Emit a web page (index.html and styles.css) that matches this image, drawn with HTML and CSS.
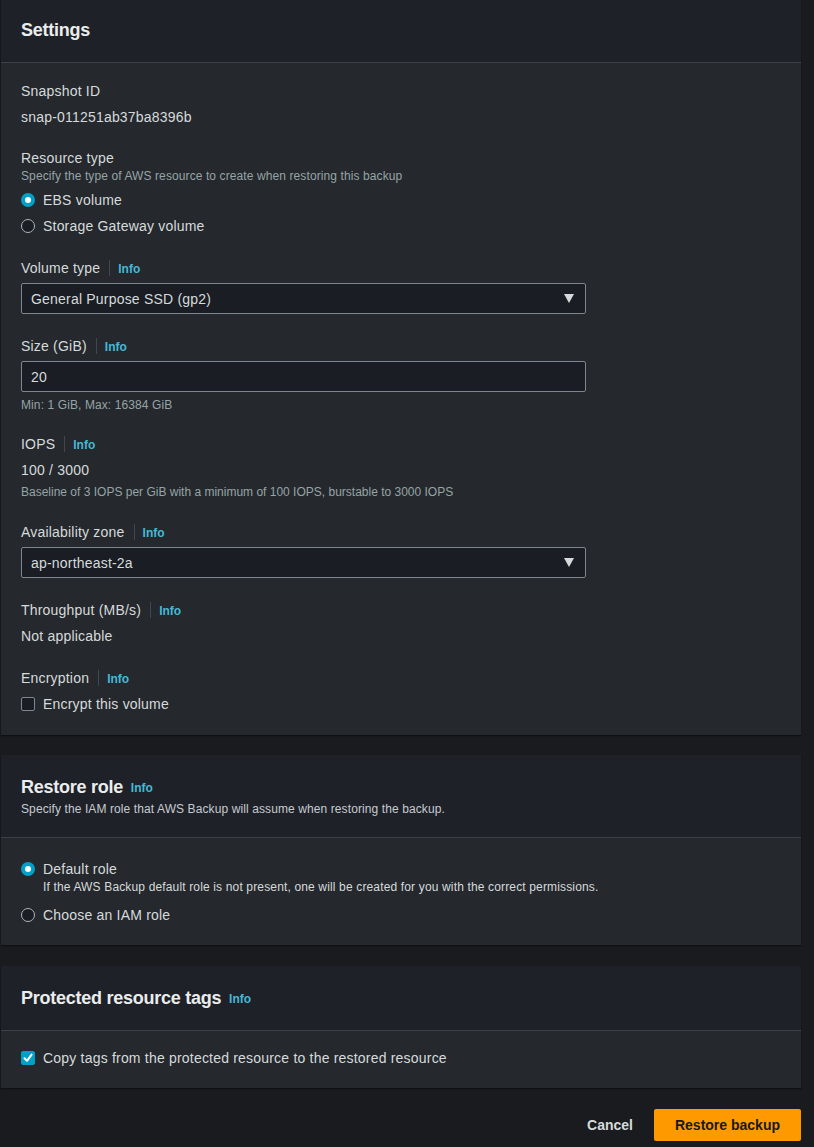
FILE: index.html
```html
<!DOCTYPE html>
<html>
<head>
<meta charset="utf-8">
<link rel="stylesheet" href="styles.css">
</head>
<body>
<div class="page">
  <section class="panel">
    <div class="panel-head head-settings">
      <h2 class="title">Settings</h2>
    </div>
    <div class="panel-body settings-body">
      <div class="field f-snap">
        <div class="label">Snapshot ID</div>
        <div class="value">snap-011251ab37ba8396b</div>
      </div>
      <div class="field f-res">
        <div class="label">Resource type</div>
        <div class="desc">Specify the type of AWS resource to create when restoring this backup</div>
        <div class="radio-row r-first"><span class="radio on"></span><span>EBS volume</span></div>
        <div class="radio-row"><span class="radio"></span><span>Storage Gateway volume</span></div>
      </div>
      <div class="field f-vol">
        <div class="label-row"><span class="label">Volume type</span><span class="sep"></span><span class="info">Info</span></div>
        <div class="select">General Purpose SSD (gp2)<span class="caret"></span></div>
      </div>
      <div class="field f-size">
        <div class="label-row"><span class="label">Size (GiB)</span><span class="sep"></span><span class="info">Info</span></div>
        <div class="select">20</div>
        <div class="hint">Min: 1 GiB, Max: 16384 GiB</div>
      </div>
      <div class="field f-iops">
        <div class="label-row"><span class="label">IOPS</span><span class="sep"></span><span class="info">Info</span></div>
        <div class="value v-iops">100 / 3000</div>
        <div class="hint h-iops">Baseline of 3 IOPS per GiB with a minimum of 100 IOPS, burstable to 3000 IOPS</div>
      </div>
      <div class="field f-az">
        <div class="label-row"><span class="label">Availability zone</span><span class="sep"></span><span class="info">Info</span></div>
        <div class="select">ap-northeast-2a<span class="caret"></span></div>
      </div>
      <div class="field f-tp">
        <div class="label-row"><span class="label">Throughput (MB/s)</span><span class="sep"></span><span class="info">Info</span></div>
        <div class="value v-tp">Not applicable</div>
      </div>
      <div class="field f-enc">
        <div class="label-row"><span class="label">Encryption</span><span class="sep"></span><span class="info">Info</span></div>
        <div class="radio-row r-enc"><span class="check"></span><span>Encrypt this volume</span></div>
      </div>
    </div>
  </section>

  <section class="panel">
    <div class="panel-head head-role">
      <h2 class="title">Restore role <span class="info info-title">Info</span></h2>
      <div class="head-desc">Specify the IAM role that AWS Backup will assume when restoring the backup.</div>
    </div>
    <div class="panel-body role-body">
      <div class="radio-row"><span class="radio on"></span><span>Default role</span></div>
      <div class="radio-desc">If the AWS Backup default role is not present, one will be created for you with the correct permissions.</div>
      <div class="radio-row r-iam"><span class="radio"></span><span>Choose an IAM role</span></div>
    </div>
  </section>

  <section class="panel">
    <div class="panel-head head-tags">
      <h2 class="title">Protected resource tags <span class="info info-title">Info</span></h2>
    </div>
    <div class="panel-body tags-body">
      <div class="radio-row"><span class="check on"><svg viewBox="0 0 14 14" width="14" height="14"><path d="M3.5 7.2 L6 9.8 L10.6 3.6" fill="none" stroke="#fff" stroke-width="2" stroke-linecap="round" stroke-linejoin="round"/></svg></span><span>Copy tags from the protected resource to the restored resource</span></div>
    </div>
  </section>

  <div class="actions">
    <span class="cancel">Cancel</span>
    <span class="primary">Restore backup</span>
  </div>
</div>
</body>
</html>
```

FILE: styles.css
```css
* { box-sizing: border-box; }
html, body { margin: 0; padding: 0; }
body {
  background: #1a1b1f;
  font-family: "Liberation Sans", Arial, sans-serif;
  color: #d5dbdb;
  font-size: 14px;
  width: 814px;
  height: 1147px;
  overflow: hidden;
}
.page {
  padding-left: 1px;
  display: flex;
  flex-direction: column;
}
.panel {
  width: 800px;
  background: #25282d;
  box-shadow: 0 1px 1px #0f1013;
  margin-bottom: 21px;
}
.panel:first-child { margin-bottom: 20px; }
.panel-head {
  background: #1f2128;
  border-bottom: 1px solid #3d4047;
  padding: 0 20px;
}
.title {
  margin: 0;
  font-size: 18px;
  font-weight: bold;
  color: #eaeded;
  line-height: 22px;
  letter-spacing: -0.25px;
}
.head-settings { height: 63px; padding-top: 19px; }
.head-role { height: 83px; padding-top: 21px; }
.head-tags { height: 65px; padding-top: 21px; }
.head-desc { font-size: 12px; color: #c6cbd1; margin-top: 2px; line-height: 16px; letter-spacing: 0.1px; }

.panel-body { padding: 0 20px; letter-spacing: 0.2px; }
.settings-body { padding-top: 18px; padding-bottom: 21px; }
.field { display: flex; flex-direction: column; }
.label { font-size: 14px; line-height: 20px; color: #d5dbdb; }
.value { font-size: 14px; line-height: 20px; color: #d5dbdb; margin-top: 6px; }
.desc { font-size: 12px; line-height: 16px; color: #95a5a6; margin-top: 0; letter-spacing: 0.1px; }
.hint { font-size: 12px; line-height: 14px; color: #95a5a6; margin-top: 6px; letter-spacing: 0.1px; }
.h-iops { margin-top: 5px; letter-spacing: 0; }

.f-res { margin-top: 21px; }
.f-vol { margin-top: 22px; }
.f-size { margin-top: 22px; }
.f-iops { margin-top: 22px; }
.f-az { margin-top: 23px; }
.f-tp { margin-top: 22px; }
.f-enc { margin-top: 22px; }

.label-row { display: flex; align-items: center; height: 20px; }
.sep { width: 1px; height: 16px; background: #414750; margin: 0 8px 0 9px; }
.info { font-size: 12px; font-weight: bold; color: #44b9d6; padding-top: 1px; letter-spacing: 0; }
.info-title { margin-left: 3px; font-size: 12px; vertical-align: middle; }

.select {
  margin-top: 5px;
  width: 565px;
  height: 31px;
  background: #1a1d24;
  border: 1px solid #7c878f;
  border-radius: 2px;
  padding: 0 9px;
  display: flex;
  align-items: center;
  justify-content: space-between;
  font-size: 14px;
  color: #d5dbdb;
}
.caret {
  width: 0; height: 0;
  border-left: 5px solid transparent;
  border-right: 5px solid transparent;
  border-top: 9px solid #d5dbdb;
  margin-right: 2px;
}
.f-size .hint { margin-top: 6px; }

.radio-row { display: flex; align-items: center; gap: 8px; height: 20px; margin-top: 6px; font-size: 14px; color: #d5dbdb; }
.r-first { margin-top: 6px; }
.radio {
  width: 14px; height: 14px; border-radius: 50%;
  border: 1px solid #aab7b8;
  background: #1a1d24;
  flex: none;
}
.radio.on {
  border: 4px solid #00a1c9;
  background: #ffffff;
}
.check {
  width: 14px; height: 14px;
  border: 1px solid #7c878f;
  border-radius: 2px;
  background: #1a1d24;
  flex: none;
  display: flex;
}
.check.on { background: #00a1c9; border-color: #00a1c9; }
.check.on svg { margin: -1px; }
.r-enc { margin-top: 6px; }

.role-body { padding-top: 21px; padding-bottom: 20px; }
.role-body .radio-row { margin-top: 0; }
.radio-desc { font-size: 12px; color: #d5dbdb; padding-left: 22px; line-height: 16px; margin-top: 0; letter-spacing: 0.15px; }
.role-body .r-iam { margin-top: 10px; }

.tags-body { padding-top: 17px; padding-bottom: 20px; }
.tags-body .radio-row { margin-top: 0; }

.actions {
  width: 800px;
  display: flex;
  justify-content: flex-end;
  align-items: center;
  margin-top: 0;
}
.cancel { font-weight: bold; color: #d5dbdb; font-size: 14px; margin-right: 21px; }
.primary {
  background: #ff9900;
  color: #16191f;
  font-weight: bold;
  font-size: 14px;
  height: 32px;
  width: 147px;
  border-radius: 2px;
  display: flex;
  align-items: center;
  justify-content: center;
}
```
